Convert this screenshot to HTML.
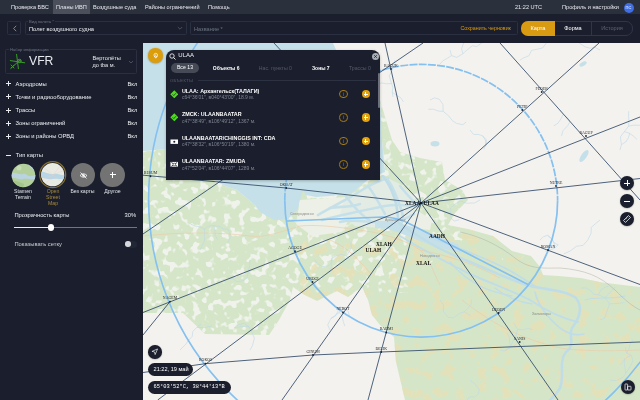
<!DOCTYPE html>
<html><head><meta charset="utf-8">
<style>
*{margin:0;padding:0;box-sizing:border-box}
html,body{width:640px;height:400px;overflow:hidden;background:#1b1f2d;font-family:"Liberation Sans",sans-serif;color:#fff}
.a{position:absolute;white-space:nowrap}
#top{position:absolute;left:0;top:0;width:640px;height:14px;background:#2b303d}
#bar2{position:absolute;left:0;top:14px;width:640px;height:29px;background:#1b1f2d}
#left{position:absolute;left:0;top:43px;width:143px;height:357px;background:#1b1f2d}
#map{position:absolute;left:143px;top:43px;width:497px;height:357px;overflow:hidden;background:#f3f1ec}
.tab{font-size:5.6px;line-height:14px;top:0;color:#e6e8ec}
.fld{position:absolute;border:0.6px solid #2a3041;border-radius:1.5px}
.lbl{font-size:4.2px;color:#6c7282;background:#1b1f2d;padding:0 1px}
.row{font-size:5.8px;color:#eceef2}
.plus{position:absolute;width:5px;height:5px}
.plus:before{content:"";position:absolute;left:0;top:2px;width:5px;height:1px;background:#e8eaee}
.plus:after{content:"";position:absolute;left:2px;top:0;width:1px;height:5px;background:#e8eaee}
.circ{position:absolute;border-radius:50%}
#left,#top,#bar2,#overlay,#map{will-change:transform}</style></head><body>
<div id="top">
  <div class="a tab" style="left:11px">Проверка БВС</div>
  <div class="a" style="left:53px;top:0;width:37px;height:14px;background:#4a4f5b"></div>
  <div class="a tab" style="left:56px">Планы ИВП</div>
  <div class="a tab" style="left:93px">Воздушные суда</div>
  <div class="a tab" style="left:145px">Районы ограничений</div>
  <div class="a tab" style="left:208px">Помощь</div>
  <div class="a tab" style="left:515px">21:22 UTC</div>
  <div class="a tab" style="left:562px">Профиль и настройки</div>
  <div class="circ" style="left:623.5px;top:2.7px;width:10px;height:10px;background:#3f6fe6"></div>
  <div class="a" style="left:623.5px;top:2.7px;width:10px;line-height:10px;font-size:4px;text-align:center;color:#fff">ПС</div>
</div>
<div id="bar2">
  <div class="fld" style="left:7px;top:7px;width:14px;height:14px"></div><svg class="a" style="left:11.5px;top:11px" width="6" height="7" viewBox="0 0 6 7"><path d="M4.2 0.8 L1.6 3.5 L4.2 6.2" fill="none" stroke="#d99b12" stroke-width="0.8"/></svg>
  <div class="fld" style="left:25px;top:7px;width:162px;height:14px"></div>
  <div class="a lbl" style="left:28px;top:4.6px">Вид полета *</div>
  <div class="a" style="left:29px;top:8px;font-size:5.7px;line-height:14px;color:#eceef2">Полет воздушного судна</div>
  <svg class="a" style="left:176.5px;top:12px" width="6" height="4" viewBox="0 0 6 4"><path d="M0.8 1 L3 3.2 L5.2 1" fill="none" stroke="#6c7282" stroke-width="0.6"/></svg>
  <div class="fld" style="left:190px;top:7px;width:328px;height:14px"></div>
  <div class="a" style="left:194px;top:7.5px;font-size:5.6px;line-height:14px;color:#6c7282">Название *</div>
  <div class="a" style="left:460.5px;top:7px;font-size:5.3px;line-height:14px;color:#d99b12">Сохранить черновик</div>
  <div class="a" style="left:521px;top:7px;width:112px;height:14.5px;border:0.6px solid #30364a;border-radius:7px"></div>
  <div class="a" style="left:521px;top:7px;width:34px;height:14.5px;background:#d99b12;border-radius:7px 0 0 7px"></div>
  <div class="a" style="left:521px;top:7px;width:34px;font-size:5.6px;line-height:14.5px;text-align:center;color:#fff">Карта</div>
  <div class="a" style="left:555px;top:7px;width:36px;font-size:5.6px;line-height:14.5px;text-align:center;color:#fff">Форма</div>
  <div class="a" style="left:591px;top:7px;width:0.6px;height:14.5px;background:#30364a"></div>
  <div class="a" style="left:591px;top:7px;width:42px;font-size:5.6px;line-height:14.5px;text-align:center;color:#5d6373">История</div>
</div>
<div id="left">
  <div class="fld" style="left:5px;top:6px;width:132px;height:24.5px"></div>
  <div class="a lbl" style="left:9px;top:3.8px">Набор информации</div>
  <svg class="a" style="left:9px;top:10px" width="17" height="17" viewBox="0 0 17 17">
    <g stroke="#3a9c28" stroke-width="1" fill="none" stroke-linecap="round">
      <path d="M7.6 1.4 L9.4 15.7"/><path d="M1.3 7.6 L15.7 9.8"/><path d="M1.9 15.4 L11.6 6.4"/><circle cx="10.4" cy="8" r="1.7"/><path d="M2 12 L5 15 M2 15 L5 12"/>
    </g>
  </svg>
  <div class="a" style="left:29px;top:10.5px;font-size:12.2px;line-height:14px;color:#e9ebef">VFR</div>
  <div class="a" style="left:92.5px;top:12px;font-size:5.6px;line-height:6.8px;color:#e8eaee">Вертолёты<br>до tba м.</div>
  <svg class="a" style="left:127.5px;top:16.5px" width="6" height="4" viewBox="0 0 6 4"><path d="M1 1 L3 3 L5 1" stroke="#5d6373" stroke-width="0.7" fill="none"/></svg>
  <div class="plus" style="left:6.3px;top:38.2px"></div><div class="a row" style="left:15.5px;top:37.5px;line-height:7px">Аэродромы</div><div class="a row" style="left:127.5px;top:37.5px;line-height:7px">Вкл</div>
  <div class="plus" style="left:6.3px;top:51.4px"></div><div class="a row" style="left:15.5px;top:50.7px;line-height:7px">Точки и радиооборудование</div><div class="a row" style="left:127.5px;top:50.7px;line-height:7px">Вкл</div>
  <div class="plus" style="left:6.3px;top:64.5px"></div><div class="a row" style="left:15.5px;top:63.8px;line-height:7px">Трассы</div><div class="a row" style="left:127.5px;top:63.8px;line-height:7px">Вкл</div>
  <div class="plus" style="left:6.3px;top:77.6px"></div><div class="a row" style="left:15.5px;top:76.9px;line-height:7px">Зоны ограничений</div><div class="a row" style="left:127.5px;top:76.9px;line-height:7px">Вкл</div>
  <div class="plus" style="left:6.3px;top:90.7px"></div><div class="a row" style="left:15.5px;top:90px;line-height:7px">Зоны и районы ОРВД</div><div class="a row" style="left:127.5px;top:90px;line-height:7px">Вкл</div>
  <div class="a" style="left:5.8px;top:111.9px;width:5.5px;height:1px;background:#e8eaee"></div><div class="a row" style="left:15.8px;top:109px;line-height:7px">Тип карты</div>
  <svg class="a" style="left:11px;top:119.6px" width="25" height="25" viewBox="0 0 25 25"><defs><clipPath id="c1"><circle cx="12.5" cy="12.5" r="11.8"/></clipPath></defs><g clip-path="url(#c1)"><rect width="25" height="25" fill="#b3cf9c"/><path d="M0,10 C5,9 8,12 12,11 C15,10 17,14 20,13 L25,12 L25,16 C20,17 16,15 12,16 C8,17 4,14 0,15Z" fill="#b9d3e0"/><path d="M16,0 L25,0 L25,8 C22,7 19,4 16,0Z" fill="#bcd6e2"/><path d="M2,18 C6,17 9,20 13,21 L12,25 L0,25Z" fill="#a3c48a"/><circle cx="8" cy="5" r="2.5" fill="#c6dcb4"/></g></svg>
  <svg class="a" style="left:39.4px;top:118.4px" width="27.4" height="27.4" viewBox="0 0 27.4 27.4"><defs><clipPath id="c2"><circle cx="13.7" cy="13.7" r="11.6"/></clipPath></defs><circle cx="13.7" cy="13.7" r="13" fill="none" stroke="#857236" stroke-width="1.2"/><g clip-path="url(#c2)"><rect width="28" height="28" fill="#e9ebe3"/><path d="M0,11 C6,10 10,14 15,13 C19,12 22,15 28,14 L28,18 C22,19 18,17 14,18 C8,19 4,16 0,17Z" fill="#b8d6e6"/><path d="M3,5 L24,22 M6,24 L22,4 M0,20 L28,8" stroke="#e6cfc8" stroke-width="0.4"/><path d="M0,24 L10,28 L0,28Z" fill="#cfe3c4"/></g></svg>
  <div class="circ" style="left:70.5px;top:119.5px;width:24.5px;height:24.5px;background:#737373"></div>
  <svg class="a" style="left:78.5px;top:127.5px" width="9" height="9" viewBox="0 0 9 9"><path d="M1 4.5 Q4.5 1 8 4.5 Q4.5 8 1 4.5Z" stroke="#fff" stroke-width="0.8" fill="none"/><circle cx="4.5" cy="4.5" r="1.2" fill="#fff"/><path d="M1.5 1.5 L7.5 7.5" stroke="#fff" stroke-width="0.8"/></svg>
  <div class="circ" style="left:100.3px;top:119.5px;width:24.5px;height:24.5px;background:#737373"></div>
  <div class="a" style="left:109.5px;top:131.3px;width:6px;height:1px;background:#fff"></div><div class="a" style="left:112px;top:128.8px;width:1px;height:6px;background:#fff"></div>
  <div class="a" style="left:11px;top:146px;width:24px;text-align:center;font-size:5.2px;line-height:5.6px;color:#dfe2e6">Stamen<br>Terrain</div>
  <div class="a" style="left:41px;top:146px;width:24px;text-align:center;font-size:5.2px;line-height:5.8px;color:#a88a3a">Open<br>Street<br>Map</div>
  <div class="a" style="left:70px;top:146px;width:25px;text-align:center;font-size:5.2px;line-height:5.6px;color:#dfe2e6">Без карты</div>
  <div class="a" style="left:100px;top:146px;width:25px;text-align:center;font-size:5.2px;line-height:5.6px;color:#dfe2e6">Другое</div>
  <div class="a row" style="left:14.4px;top:169px;line-height:7px">Прозрачность карты</div>
  <div class="a row" style="left:124.5px;top:169px;line-height:7px">30%</div>
  <div class="a" style="left:14.4px;top:184.3px;width:122.6px;height:0.7px;background:#70757f"></div>
  <div class="a" style="left:14.4px;top:184.2px;width:37px;height:0.9px;background:#e8eaee"></div>
  <div class="circ" style="left:47.9px;top:181.3px;width:6.6px;height:6.6px;background:#fff"></div>
  <div class="a row" style="left:14.4px;top:197.8px;line-height:7px;color:#c9ccd2">Показывать сетку</div>
  <div class="a" style="left:125px;top:197.6px;width:12px;height:7px;border-radius:3.5px;background:#222736"></div>
  <div class="circ" style="left:125.4px;top:198.3px;width:5.5px;height:5.5px;background:#d6d8dc"></div>
</div>
<div id="map"><svg width="497" height="357" viewBox="143 43 497 357" style="position:absolute;left:0;top:0"><rect x="143" y="43" width="497" height="357" fill="#f4f2ee"/><path d="M143,151 L167,149 L190,165 L215,180 L225,186 L237,190 L256,206 L269,210 L300,188 L338,180 L385,168 L382,140 L380,100 L386,120 L392,140 L400,152 L420,158 L442,162 L445,180 L462,190 L468,200 L455,213 L448,225 L468,229 L493,236 L512,251 L531,256 L540,267 L543,275 L559,276 L581,278 L602,282.5 L640,287 L640,400 L405,400 L396,362 L394,337 L380,325 L372,315 L368,300 L362,287 L348,297 L337,291 L317,301 L303,294 L293,287 L290,300 L279,320 L269,335 L205,334 L183,313 L143,313Z" fill="#d5e6c8"/><clipPath id="gc"><path d="M143,151 L167,149 L190,165 L215,180 L225,186 L237,190 L256,206 L269,210 L300,188 L338,180 L385,168 L382,140 L380,100 L386,120 L392,140 L400,152 L420,158 L442,162 L445,180 L462,190 L468,200 L455,213 L448,225 L468,229 L493,236 L512,251 L531,256 L540,267 L543,275 L559,276 L581,278 L602,282.5 L640,287 L640,400 L405,400 L396,362 L394,337 L380,325 L372,315 L368,300 L362,287 L348,297 L337,291 L317,301 L303,294 L293,287 L290,300 L279,320 L269,335 L205,334 L183,313 L143,313Z"/></clipPath><filter id="tx" x="0" y="0" width="1" height="1" color-interpolation-filters="sRGB"><feTurbulence type="fractalNoise" baseFrequency="0.13" numOctaves="2" seed="5"/><feColorMatrix type="matrix" values="0 0 0 0 0.937  0 0 0 0 0.953  0 0 0 0 0.925  10 0 0 0 -5.5"/></filter><filter id="tx2" x="0" y="0" width="1" height="1" color-interpolation-filters="sRGB"><feTurbulence type="fractalNoise" baseFrequency="0.11" numOctaves="3" seed="5"/><feColorMatrix type="matrix" values="0 0 0 0 0.937  0 0 0 0 0.953  0 0 0 0 0.925  9 0 0 0 -6.9"/></filter><filter id="ty" x="0" y="0" width="1" height="1" color-interpolation-filters="sRGB"><feTurbulence type="fractalNoise" baseFrequency="0.09" numOctaves="2" seed="11"/><feColorMatrix type="matrix" values="0 0 0 0 0.90  0 0 0 0 0.88  0 0 0 0 0.72  10 0 0 0 -5.6"/></filter><g clip-path="url(#gc)"><rect x="143" y="43" width="157" height="357" filter="url(#tx)"/><rect x="300" y="43" width="108" height="250" filter="url(#tx)"/><rect x="408" y="43" width="232" height="230" filter="url(#tx2)"/><rect x="408" y="140" width="70" height="100" filter="url(#tx)"/><rect x="300" y="230" width="340" height="170" filter="url(#ty)" opacity="0.85"/></g><path d="M143,43 L333,43 L337,52 L360,80 L380,100 L382,140 L385,172 L370,178 L352,193 L330,196 L316,197 L306,195 L303,190 L300,200 L298,209 L288,219 L274,220 L260,212 L256,206 L243,195 L237,190 L225,186 L215,180 L190,165 L167,149 L143,151Z" fill="#c6e0e9"/><path d="M300,200 L345,197 L352,214 L342,232 L312,236 L296,224Z" fill="#ecf0e6"/><path d="M398,212 L418,211 L432,220 L430,230 L410,228 L396,224Z" fill="#ecefe6"/><path d="M345,198 L360,190 L385,177 L400,184 L412,194 L418,204 L412,214 L400,224 L380,228 L355,226 L340,214Z" fill="#e3ece4"/><path d="M375,221 L398,223 L420,229 L440,237 L458,244 L462,253 L445,249 L428,244 L412,238 L400,233 L388,229 L375,228Z" fill="#c6e0e9"/><g fill="none" stroke="#c6e0e9" stroke-width="2.6" stroke-linecap="round"><path d="M318,215 C335,205 350,198 362,190 C372,184 380,180 388,178"/><path d="M322,220 C345,214 365,210 385,206 C395,204 405,205 414,206"/><path d="M340,222 C355,218 372,224 390,222 C400,221 408,218 414,214"/><path d="M345,195 C352,205 360,215 372,222"/><path d="M368,186 C375,195 380,205 385,214"/><path d="M388,180 C395,190 398,200 402,212 C404,218 402,224 398,228"/><path d="M400,186 C405,192 410,198 416,204"/><path d="M330,208 C340,206 350,208 360,204"/></g><g fill="none" stroke="#c0dde7" stroke-linecap="round"><path d="M383,176 C392,188 398,205 398,222 C405,228 415,234 425,240 C440,250 455,256 470,262 C490,270 510,280 530,286 C548,290 565,290 576,298 C584,308 578,320 572,328 C568,336 576,345 566,352 C558,362 565,375 560,388 C556,395 552,398 550,400" stroke-width="2.6"/><path d="M400,236 C420,248 445,262 470,274 C495,285 515,292 530,300 C545,310 560,318 578,322" stroke-width="2"/><path d="M430,238 C455,246 480,256 505,268 C520,276 528,282 535,286" stroke-width="1.6"/><path d="M535,292 C538,305 548,318 560,328 C568,334 576,336 584,334" stroke-width="1.6"/><path d="M495,288 C505,296 518,302 532,304" stroke-width="1.3"/><path d="M450,262 C470,285 490,292 512,296" stroke-width="1.3"/><path d="M585,300 C595,296 610,300 625,296" stroke-width="1.2"/></g><g fill="none" stroke="#bcd9e8" stroke-width="0.6" stroke-linejoin="round"><path d="M451.5,55.7 L447.2,58.3 L442.9,60.8 L439.6,64.5"/><path d="M462.9,53.7 L461.6,48.8 L463.1,44.1 L466.2,40.1"/><path d="M482.5,42.5 L480.8,37.8 L479.0,33.1 L475.6,29.4"/><path d="M482.8,35.0 L481.2,30.3 L482.0,25.3 L484.2,20.8"/><path d="M450.0,50.0 L451.5,55.7 L456.8,57.4 L462.9,53.7 L467.2,49.8 L472.5,45.7 L476.5,46.6 L482.5,42.5 L482.8,35.0"/><path d="M520.0,60.0 L523.7,57.9 L528.9,55.8 L531.6,50.3 L537.5,49.1 L542.5,48.0 L546.7,42.6 L545.3,38.5 L543.5,32.5 L546.3,29.0"/><path d="M600.0,50.0 L594.4,47.0 L590.3,48.3 L585.0,46.9 L578.7,42.6 L571.4,39.4 L565.2,35.2 L560.5,33.5"/><path d="M482.6,135.8 L485.4,140.0 L485.9,144.9 L483.7,149.4"/><path d="M470.0,130.0 L473.5,134.4 L478.7,134.5 L482.6,135.8 L486.6,140.1 L485.6,146.2"/><path d="M563.1,114.5 L560.8,119.0 L558.0,123.2 L553.8,125.9"/><path d="M560.0,110.0 L563.1,114.5 L568.1,118.0 L569.9,121.6 L568.0,125.3 L563.0,130.7 L561.5,136.1"/><path d="M621.4,144.6 L625.7,142.0 L628.4,137.8 L629.8,133.0"/><path d="M624.3,131.7 L629.1,133.1 L633.3,136.0 L637.0,139.3"/><path d="M628.6,126.2 L628.9,121.2 L628.6,116.2 L628.7,111.2"/><path d="M640.4,125.2 L644.8,122.8 L648.5,119.4 L652.1,116.0"/><path d="M620.0,150.0 L621.4,144.6 L620.4,136.9 L624.3,131.7 L628.6,126.2 L633.4,125.2 L640.4,125.2"/><path d="M450.7,212.5 L445.7,212.1 L440.9,210.7 L436.6,208.2"/><path d="M480.0,200.0 L474.4,203.0 L466.5,203.2 L460.8,201.0 L454.4,204.4 L450.7,208.2 L450.7,212.5 L451.1,218.5 L454.3,221.0 L459.3,219.7"/><path d="M600.0,220.0 L596.2,223.1 L591.2,227.4 L591.1,233.3 L587.7,240.1 L583.1,245.4 L576.4,246.3 L570.2,251.0 L563.6,253.9"/><path d="M547.7,235.4 L551.5,238.7 L554.2,242.9 L554.1,247.9"/><path d="M558.2,244.7 L554.7,248.3 L550.0,249.9 L545.2,251.5"/><path d="M540.0,240.0 L543.5,236.7 L547.7,235.4 L551.3,238.3 L554.2,243.0 L558.2,244.7"/><path d="M391.6,83.5 L386.6,83.8 L381.6,82.9 L377.0,84.8"/><path d="M392.3,92.4 L396.4,95.2 L400.7,97.7 L403.4,101.9"/><path d="M395.0,60.0 L393.4,64.3 L392.4,70.1 L389.2,75.9 L391.6,83.5 L392.8,87.5 L392.3,92.4 L393.0,96.9"/><path d="M443.1,111.3 L438.1,111.0 L433.4,109.2 L428.4,109.3"/><path d="M430.0,100.0 L434.7,97.8 L439.5,99.4 L443.0,104.7 L443.1,111.3 L448.7,115.9 L452.3,120.6 L456.5,123.4 L462.8,124.7 L466.2,122.0"/><path d="M346.4,256.0 L349.1,251.8 L351.3,247.3 L350.8,242.3"/><path d="M331.9,258.1 L331.8,263.1 L331.0,268.0 L329.3,272.7"/><path d="M326.5,267.1 L321.6,266.2 L317.3,263.7 L314.6,259.4"/><path d="M350.0,260.0 L346.4,256.0 L341.2,254.3 L336.6,255.7 L331.9,258.1 L331.0,263.5 L326.5,267.1"/><path d="M330.9,318.5 L335.3,316.1 L337.7,311.7 L339.4,307.0"/><path d="M339.3,312.4 L342.3,316.4 L343.2,321.4 L344.9,326.1"/><path d="M339.9,306.8 L344.8,308.2 L348.3,311.7 L349.6,316.6"/><path d="M330.0,330.0 L327.7,324.9 L330.9,318.5 L334.7,315.7 L339.3,312.4 L339.9,306.8"/><path d="M248.9,326.7 L243.9,326.5 L238.9,327.0 L233.9,327.6"/><path d="M250.0,350.0 L252.4,345.8 L254.4,338.1 L251.7,332.0 L248.9,326.7 L243.8,323.2 L236.9,325.5"/><path d="M196.9,327.3 L201.9,327.7 L206.9,327.2 L211.7,325.9"/><path d="M180.0,350.0 L185.7,344.4 L187.9,341.0 L192.2,336.4 L192.8,331.5 L196.9,327.3 L201.4,323.6"/><path d="M464.2,311.9 L467.6,308.2 L470.9,304.5 L471.8,299.6"/><path d="M440.0,300.0 L443.2,304.5 L443.6,311.6 L448.2,317.5 L453.4,317.8 L459.3,313.4 L464.2,311.9 L470.9,315.8"/><path d="M609.5,303.9 L614.5,303.5 L619.5,303.3 L624.5,302.7"/><path d="M605.0,297.6 L608.6,294.1 L612.0,290.4 L615.4,286.8"/><path d="M598.4,294.8 L600.7,290.3 L604.7,287.4 L609.5,285.8"/><path d="M593.8,294.4 L590.6,290.5 L586.3,288.0 L581.3,288.0"/><path d="M600.0,320.0 L604.7,318.2 L606.9,311.5 L609.5,303.9 L605.0,297.6 L598.4,294.8 L593.8,294.4"/><path d="M504.5,350.9 L508.8,348.3 L513.5,346.5 L516.9,342.8"/><path d="M510.3,347.3 L509.6,342.3 L509.4,337.3 L507.0,333.0"/><path d="M515.8,335.6 L519.9,338.5 L523.1,342.3 L524.4,347.1"/><path d="M517.7,329.5 L522.7,329.9 L527.4,328.5 L532.3,329.5"/><path d="M500.0,350.0 L504.5,350.9 L510.3,347.3 L512.9,341.5 L515.8,335.6 L517.7,329.5 L513.6,322.8"/><path d="M204.6,229.1 L200.1,226.9 L195.2,226.0 L190.5,224.1"/><path d="M213.7,225.6 L215.0,230.4 L215.1,235.4 L217.7,239.6"/><path d="M228.0,229.2 L230.0,233.8 L230.0,238.8 L227.4,243.0"/><path d="M200.0,250.0 L202.3,245.4 L204.4,240.8 L204.6,236.3 L204.6,229.1 L207.6,226.2 L213.7,225.6 L220.0,226.5 L223.1,229.1 L228.0,229.2"/><path d="M250.0,260.0 L249.7,265.5 L248.0,272.6 L247.0,277.8 L243.4,280.7 L236.8,281.6 L232.7,278.7 L227.4,277.2"/><path d="M625.7,373.3 L625.0,368.3 L624.2,363.4 L624.6,358.4"/><path d="M631.4,355.4 L626.8,357.3 L623.4,361.0 L620.2,364.8"/><path d="M626.6,353.2 L629.0,348.8 L630.2,344.0 L632.9,339.8"/><path d="M610.0,380.0 L616.3,380.7 L623.4,377.1 L625.7,373.3 L630.1,366.7 L633.0,360.7 L631.4,355.4 L626.6,353.2 L625.1,347.2"/><path d="M466.2,401.5 L461.4,400.3 L456.6,401.8 L453.4,405.6"/><path d="M464.6,408.0 L468.6,411.0 L473.4,412.3 L477.6,415.0"/><path d="M470.0,380.0 L476.0,385.1 L479.1,389.4 L478.7,393.9 L474.3,397.1 L469.2,397.0 L466.2,401.5 L464.6,408.0 L468.7,414.5"/></g><path d="M460,232 C480,236 500,246 515,258 C530,270 545,268 560,268 C585,270 600,276 615,290 C625,300 632,306 640,310" fill="none" stroke="#aeb0a2" stroke-width="0.5"/><g fill="none" stroke="#ecc9a6" stroke-width="0.6"><path d="M143,236 C180,232 220,232 250,236 C265,238 280,232 300,226"/><path d="M300,226 C320,224 345,228 372,232 C390,236 405,240 420,250 C430,258 432,270 440,285"/><path d="M420,250 C445,255 470,262 500,278"/><path d="M462,300 C485,318 510,334 545,344 C560,350 590,352 640,350"/><path d="M330,240 C350,248 360,262 372,275"/></g><ellipse cx="584" cy="156" rx="7" ry="2.8" fill="#c6e0e9" transform="rotate(-55 584 156)"/><ellipse cx="583" cy="64" rx="4" ry="2" fill="#c6e0e9" transform="rotate(-30 583 64)"/><ellipse cx="435" cy="143.7" rx="4.5" ry="2.7" fill="#c6e0e9"/><g fill="none" stroke="#84c0f0" stroke-width="1.6"><circle cx="421.5" cy="198.7" r="272.9"/><path d="M284.8,200.7 A136.4,136.4 0 0 1 557.6,200.7" stroke-dasharray="8 1.2" stroke-width="1.7"/><path d="M557.6,200.7 A136.4,136.4 0 0 1 284.8,200.7" stroke-width="1.7"/><path d="M287,221 L383,217 Q397,217 410,224 L529,285"/></g><g fill="none" stroke="#2f4868" stroke-width="0.85"><path d="M421,203 L385,43"/><path d="M421,203 L274,43"/><path d="M421,203 L599,43"/><path d="M421,203 L640,117"/><path d="M421,203 L640,178.5"/><path d="M421,203 L640,284.5"/><path d="M421,203 L558,400"/><path d="M421,203 L368,400"/><path d="M421,203 L282,400"/><path d="M421,203 L157.7,400"/><path d="M421,203 L143,312.5"/><path d="M421,203 L286.2,188 L143,175.2"/><path d="M143,234 L423,43"/><path d="M500,43 L640,200"/><path d="M143,372.5 L206,363.6 L313,355 L381,352 L520,346.5 L640,342"/><path d="M143,335 L170,301.6"/></g><g font-family="Liberation Serif" font-size="3.9" fill="#2a2a2a" text-anchor="middle"><text x="391" y="66.8">BAGUK</text><text x="541.7" y="89.8">FEDER</text><text x="522.3" y="107.8">PETIP</text><text x="586" y="133.8">RAGUP</text><text x="556" y="183.8">NETRE</text><text x="548" y="247.8">ROMAN</text><text x="498.6" y="310.8">DEDEN</text><text x="519.7" y="339.8">SANIS</text><text x="386.25" y="330.3">BADMI</text><text x="381.25" y="349.8">DELIK</text><text x="343" y="310.3">NEBOT</text><text x="312.5" y="279.8">UROGI</text><text x="313" y="352.8">GINUM</text><text x="205.6" y="361.4">ROKOS</text><text x="170" y="299.4">NAGEM</text><text x="150.5" y="174.05">BESUM</text><text x="286.2" y="185.8">OKBAT</text><text x="295" y="249.05">AGOGE</text></g><g fill="#1b2333"><circle cx="391" cy="69" r="0.9"/><circle cx="541.7" cy="92" r="0.9"/><circle cx="522.3" cy="110" r="0.9"/><circle cx="586" cy="136" r="0.9"/><circle cx="556" cy="186" r="0.9"/><circle cx="548" cy="250" r="0.9"/><circle cx="498.6" cy="313" r="0.9"/><circle cx="519.7" cy="342" r="0.9"/><circle cx="386.25" cy="332.5" r="0.9"/><circle cx="381.25" cy="352" r="0.9"/><circle cx="343" cy="312.5" r="0.9"/><circle cx="312.5" cy="282" r="0.9"/><circle cx="313" cy="355" r="0.9"/><circle cx="205.6" cy="363.6" r="0.9"/><circle cx="170" cy="301.6" r="0.9"/><circle cx="150.5" cy="176.25" r="0.9"/><circle cx="286.2" cy="188" r="0.9"/><circle cx="295" cy="251.25" r="0.9"/></g><g font-family="Liberation Serif" font-weight="700" font-size="5.4" fill="#111"><text x="405" y="205.4">XLAA</text><text x="423.5" y="205.4">ULAA</text><text x="429" y="238.2">AADH</text><text x="376" y="246.4">XLAH</text><text x="365.6" y="251.8">ULAH</text><text x="416" y="265.4">XLAL</text></g><circle cx="421" cy="203" r="1.1" fill="#111"/><g font-family="Liberation Sans" font-size="3.6" fill="#8a8a8a"><text x="290" y="215">Северодвинск</text><text x="385" y="221">Архангельск</text><text x="420" y="257">Новодвинск</text><text x="532" y="315">Холмогоры</text></g></svg></div><!--/map-->
<div id="overlay">
<div class="circ" style="left:148px;top:48.3px;width:14.5px;height:14.5px;background:#dc9d0c;box-shadow:0 0.5px 2px rgba(0,0,0,.35)"></div>
<svg class="a" style="left:151.5px;top:51.8px" width="7.5" height="7.5" viewBox="0 0 8 8"><g fill="none" stroke="#fff" stroke-width="0.75"><circle cx="4" cy="3.3" r="1.9"/><path d="M2.3 4.3 L4 6.6 L5.7 4.3"/></g><circle cx="4" cy="3.3" r="0.6" fill="#fff"/></svg>
<div id="pop" style="position:absolute;left:166.3px;top:49.8px;width:213.7px;height:130.2px;background:#1b1f2d;border-radius:8px 8px 0 0;box-shadow:0 1px 3px rgba(0,0,0,.25)">
  <svg class="a" style="left:3px;top:3.3px" width="7" height="7" viewBox="0 0 7 7"><circle cx="3" cy="3" r="2.2" fill="none" stroke="#fff" stroke-width="0.8"/><path d="M4.6 4.6 L6.5 6.5" stroke="#fff" stroke-width="0.9"/></svg>
  <div class="a" style="left:12px;top:2.6px;font-size:6px;line-height:7px;color:#f2f3f5">ULAA</div>
  <div class="circ" style="left:205.5px;top:3.1px;width:7px;height:7px;background:#a9adb5"></div>
  <svg class="a" style="left:205.5px;top:3.1px" width="7" height="7" viewBox="0 0 7 7"><path d="M2.2 2.2 L4.8 4.8 M4.8 2.2 L2.2 4.8" stroke="#1b1f2d" stroke-width="0.8"/></svg>
  <div class="a" style="left:4.7px;top:13.1px;width:28px;height:9.9px;border-radius:5px;background:#454a56"></div>
  <div class="a" style="left:4.7px;top:13.7px;width:28px;line-height:9.9px;text-align:center;font-size:5.2px;color:#fff">Все 13</div>
  <div class="a" style="left:46.5px;top:13.9px;line-height:9.9px;font-size:5px;color:#fff;font-weight:700">Объекты 6</div>
  <div class="a" style="left:92.5px;top:13.9px;line-height:9.9px;font-size:5.2px;color:#535968">Нас. пункты 0</div>
  <div class="a" style="left:145.7px;top:13.9px;line-height:9.9px;font-size:5px;color:#fff;font-weight:700">Зоны 7</div>
  <div class="a" style="left:182.6px;top:13.9px;line-height:9.9px;font-size:5.2px;color:#535968">Трассы 0</div>
  <div class="a" style="left:3.7px;top:28px;font-size:4px;line-height:5px;color:#5c6272;letter-spacing:0.5px">ОБЪЕКТЫ</div>
  <div class="a" style="left:31.7px;top:30.2px;width:178px;height:0.5px;background:#2c3242"></div>
  <div class="a" style="left:211.4px;top:23px;width:2.2px;height:35.3px;border-radius:1px;background:#6b707c"></div>
<svg class="a" style="left:3.4px;top:40.1px" width="8.6" height="8.6" viewBox="0 0 9 9"><path d="M4.5 0.3 L8.7 4.5 L4.5 8.7 L0.3 4.5Z" fill="#4fdc1e"/><path d="M2.8 4.6 L4 5.8 L6.2 3.4" fill="none" stroke="#1b1f2d" stroke-width="0.8"/></svg><div class="a" style="left:15.6px;top:38.1px;font-size:5.4px;line-height:6px;font-weight:700;color:#fff">ULAA: Архангельск(ТАЛАГИ)</div><div class="a" style="left:15.6px;top:44.7px;font-size:5px;line-height:6px;color:#7f8492">с64°36′01″, в040°43′00″, 18.9 м.</div><div class="circ" style="left:173px;top:40.15px;width:8.5px;height:8.5px;border:0.65px solid #a57c16"></div><div class="a" style="left:173px;top:40.15px;width:8.5px;text-align:center;font-size:5.2px;line-height:8.5px;color:#a57c16">i</div><div class="circ" style="left:195.3px;top:40.1px;width:8.6px;height:8.6px;background:#e3a20f"></div><div class="a" style="left:197.3px;top:43.95px;width:4.6px;height:0.9px;background:#fff"></div><div class="a" style="left:199.15px;top:42.1px;width:0.9px;height:4.6px;background:#fff"></div><svg class="a" style="left:3.4px;top:63.5px" width="8.6" height="8.6" viewBox="0 0 9 9"><path d="M4.5 0.3 L8.7 4.5 L4.5 8.7 L0.3 4.5Z" fill="#4fdc1e"/><path d="M2.8 4.6 L4 5.8 L6.2 3.4" fill="none" stroke="#1b1f2d" stroke-width="0.8"/></svg><div class="a" style="left:15.6px;top:61.5px;font-size:5.4px;line-height:6px;font-weight:700;color:#fff">ZMCK: ULAANBAATAR</div><div class="a" style="left:15.6px;top:68.1px;font-size:5px;line-height:6px;color:#7f8492">с47°38′49″, в106°49′12″, 1367 м.</div><div class="circ" style="left:173px;top:63.55px;width:8.5px;height:8.5px;border:0.65px solid #a57c16"></div><div class="a" style="left:173px;top:63.55px;width:8.5px;text-align:center;font-size:5.2px;line-height:8.5px;color:#a57c16">i</div><div class="circ" style="left:195.3px;top:63.5px;width:8.6px;height:8.6px;background:#e3a20f"></div><div class="a" style="left:197.3px;top:67.35px;width:4.6px;height:0.9px;background:#fff"></div><div class="a" style="left:199.15px;top:65.5px;width:0.9px;height:4.6px;background:#fff"></div><svg class="a" style="left:3.4px;top:86.9px" width="8.6" height="8.6" viewBox="0 0 9 9"><rect x="0.5" y="2.6" width="8" height="4.6" fill="#fff"/><circle cx="4.5" cy="4.9" r="1.1" fill="#1b1f2d"/></svg><div class="a" style="left:15.6px;top:84.9px;font-size:5.4px;line-height:6px;font-weight:700;color:#fff">ULAANBAATAR/CHINGGIS INT: CDA</div><div class="a" style="left:15.6px;top:91.5px;font-size:5px;line-height:6px;color:#7f8492">с47°38′32″, в106°50′19″, 1380 м.</div><div class="circ" style="left:173px;top:86.95px;width:8.5px;height:8.5px;border:0.65px solid #a57c16"></div><div class="a" style="left:173px;top:86.95px;width:8.5px;text-align:center;font-size:5.2px;line-height:8.5px;color:#a57c16">i</div><div class="circ" style="left:195.3px;top:86.9px;width:8.6px;height:8.6px;background:#e3a20f"></div><div class="a" style="left:197.3px;top:90.75px;width:4.6px;height:0.9px;background:#fff"></div><div class="a" style="left:199.15px;top:88.9px;width:0.9px;height:4.6px;background:#fff"></div><svg class="a" style="left:3.4px;top:110.3px" width="8.6" height="8.6" viewBox="0 0 9 9"><rect x="0.5" y="2" width="8" height="5" fill="#fff"/><path d="M1.5 2.6 L7.5 6.6 M7.5 2.6 L1.5 6.6" stroke="#1b1f2d" stroke-width="0.9"/><circle cx="4.5" cy="4.6" r="1.3" fill="#fff" stroke="#1b1f2d" stroke-width="0.5"/></svg><div class="a" style="left:15.6px;top:108.3px;font-size:5.4px;line-height:6px;font-weight:700;color:#fff">ULAANBAATAR: ZMUDA</div><div class="a" style="left:15.6px;top:114.9px;font-size:5px;line-height:6px;color:#7f8492">с47°52′04″, в106°44′07″, 1289 м.</div><div class="circ" style="left:173px;top:110.35px;width:8.5px;height:8.5px;border:0.65px solid #a57c16"></div><div class="a" style="left:173px;top:110.35px;width:8.5px;text-align:center;font-size:5.2px;line-height:8.5px;color:#a57c16">i</div><div class="circ" style="left:195.3px;top:110.3px;width:8.6px;height:8.6px;background:#e3a20f"></div><div class="a" style="left:197.3px;top:114.15px;width:4.6px;height:0.9px;background:#fff"></div><div class="a" style="left:199.15px;top:112.3px;width:0.9px;height:4.6px;background:#fff"></div>
</div>
<div class="circ" style="left:620.4px;top:176.4px;width:14px;height:14px;background:#1b1f2d;box-shadow:0 0.5px 1.5px rgba(0,0,0,.3)"></div>
<div class="a" style="left:624.4px;top:182.9px;width:6px;height:1px;background:#fff"></div><div class="a" style="left:626.9px;top:180.4px;width:1px;height:6px;background:#fff"></div>
<div class="circ" style="left:620.4px;top:194px;width:14px;height:14px;background:#1b1f2d;box-shadow:0 0.5px 1.5px rgba(0,0,0,.3)"></div>
<div class="a" style="left:624.4px;top:200.5px;width:6px;height:1px;background:#fff"></div>
<div class="circ" style="left:620.4px;top:211.6px;width:14px;height:14px;background:#1b1f2d;box-shadow:0 0.5px 1.5px rgba(0,0,0,.3)"></div>
<svg class="a" style="left:620.4px;top:211.6px" width="14" height="14" viewBox="0 0 14 14"><g transform="rotate(-45 7 7)"><rect x="3.5" y="5.6" width="7" height="2.8" fill="none" stroke="#fff" stroke-width="0.7"/><path d="M5.2 5.6 v1.2 M7 5.6 v1.2 M8.8 5.6 v1.2" stroke="#fff" stroke-width="0.5"/></g></svg>
<div class="circ" style="left:148.4px;top:345.2px;width:13.5px;height:13.5px;background:#1b1f2d;box-shadow:0 0.5px 1.5px rgba(0,0,0,.3)"></div>
<svg class="a" style="left:151.4px;top:348.2px" width="7.5" height="7.5" viewBox="0 0 8 8"><path d="M7 1 L1 3.6 L3.8 4.2 L4.4 7Z" fill="none" stroke="#fff" stroke-width="0.7" stroke-linejoin="round"/></svg>
<div class="a" style="left:148.4px;top:362.9px;width:44.9px;height:13.4px;border-radius:6.7px;background:#1b1f2d"></div>
<div class="a" style="left:153.6px;top:362.9px;line-height:13.4px;font-size:5.6px;color:#fff">21:22, 19 май</div>
<div class="a" style="left:148.4px;top:380.7px;width:82.2px;height:13.7px;border-radius:6.8px;background:#1b1f2d"></div>
<div class="a" style="left:153.6px;top:380.7px;line-height:13.7px;font-size:5.4px;color:#fff;font-family:'Liberation Mono',monospace">65°03′52″С, 38°44′13″В</div>
<div class="circ" style="left:620.5px;top:380.2px;width:14px;height:14px;background:#1b1f2d;box-shadow:0 0.5px 1.5px rgba(0,0,0,.3)"></div>
<svg class="a" style="left:620.5px;top:380.2px" width="14" height="14" viewBox="0 0 14 14"><g fill="none" stroke="#fff" stroke-width="0.7"><rect x="4" y="4" width="2.6" height="6" rx="0.4"/><rect x="6.6" y="6.3" width="3.4" height="3.7" rx="0.4"/></g></svg>
</div>
</body></html>
